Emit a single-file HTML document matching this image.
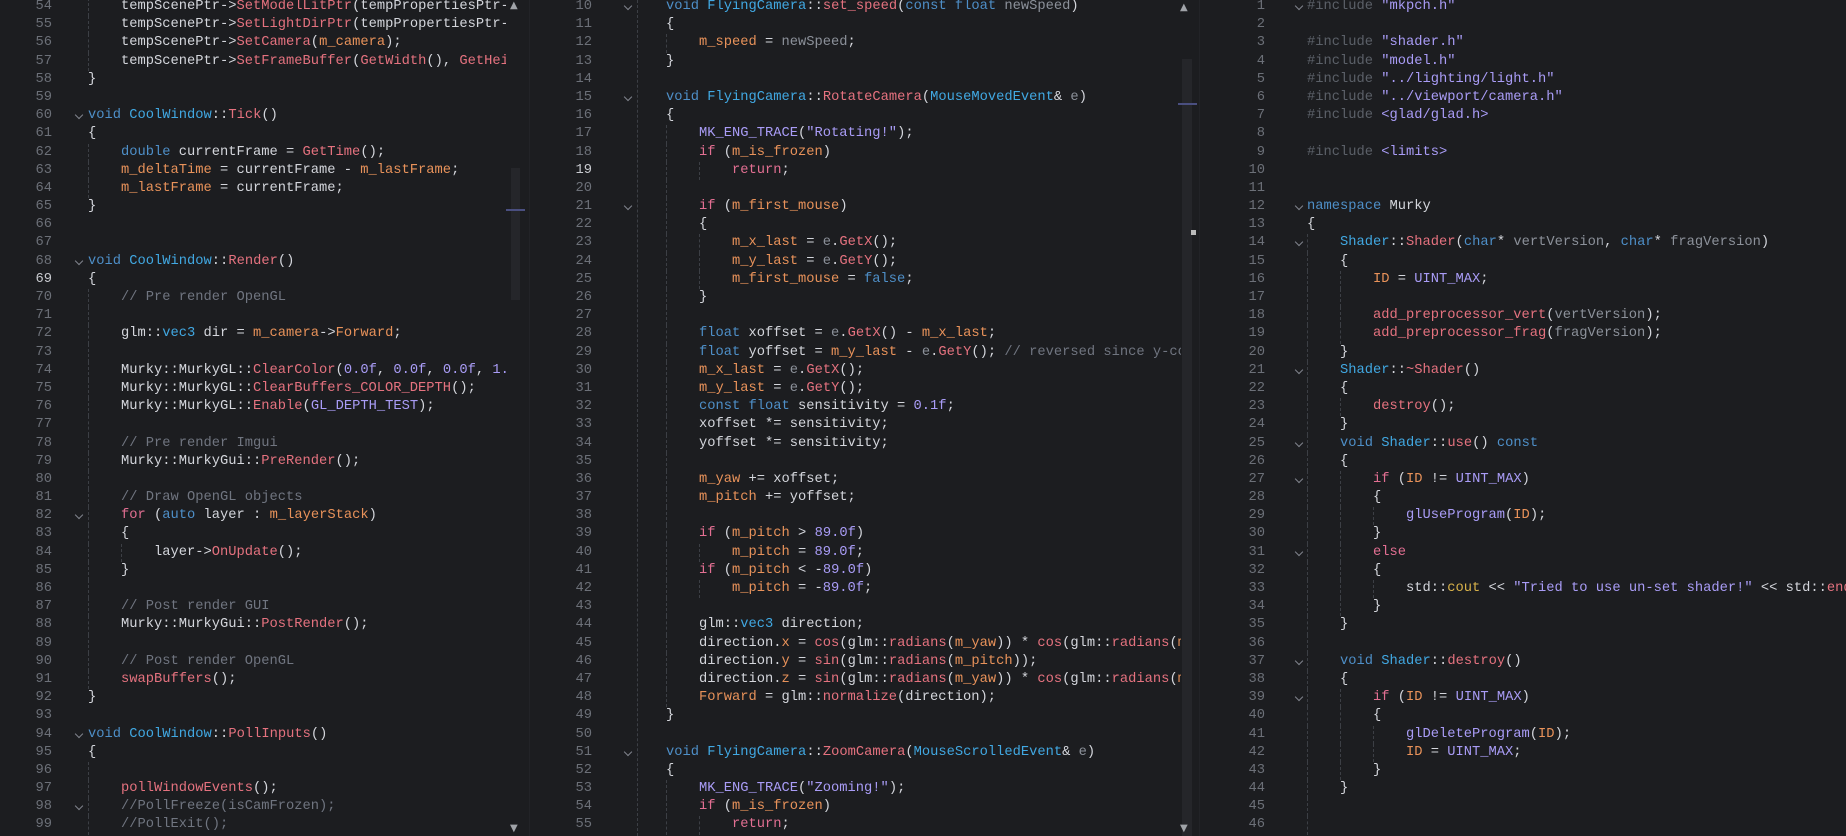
<!DOCTYPE html>
<html><head><meta charset="utf-8"><style>
html,body{margin:0;padding:0;background:#1c1d20;width:1846px;height:836px;overflow:hidden}
body{position:relative;font-family:"Liberation Mono",monospace;font-size:13.75px;color:#d4d6dc}
.p{position:absolute;top:-2px;height:840px;overflow:hidden}
.l{height:18.2px;line-height:18.2px;white-space:pre;position:relative}
.n{display:inline-block;text-align:right;color:#6c7078;vertical-align:top}
.cur{color:#c9cbd0}
.s{display:inline-block;position:relative;vertical-align:top;height:18.2px}
.f::after{content:"";position:absolute;top:5px;width:5px;height:5px;border-right:1px solid #80848c;border-bottom:1px solid #80848c;transform:rotate(45deg)}
i{display:inline-block;width:4ch;height:18.2px;border-left:1px dashed #3c3f45;box-sizing:border-box;vertical-align:top}
.k{color:#4e8fc8}.t{color:#41a8e2}.fn{color:#e5727f}.m{color:#e8925a}.c{color:#e26f92}.st{color:#a99cf6}
.o{color:#707580}.pa{color:#8c919a}.y{color:#d8b24a}.d{color:#5b6068}.w{color:#d4d6dc}
#p1{left:0;width:506px}#p1 .n{width:52px}#p1 .s{width:36px}#p1 .f::after{left:24px}
#p2{left:530px;width:651px}#p2 .n{width:62px}#p2 .s{width:74px}#p2 .f::after{left:33px}
#p3{left:1200px;width:646px}#p3 .n{width:65px}#p3 .s{width:42px}#p3 .f::after{left:31px}
.sb{position:absolute;background:#25262a}
.mk{position:absolute;height:2px;background:#4a4f80}
.ar{position:absolute;color:#a0a3a8;font-size:10px;font-family:"DejaVu Sans",sans-serif}
.vl{position:absolute;border-left:1px dashed #3c3f45}
</style></head><body>
<div class="sb" style="left:511px;top:168px;width:9px;height:132px"></div>
<div class="mk" style="left:506px;top:209px;width:19px"></div>
<div class="sb" style="left:1182px;top:59px;width:10px;height:777px"></div>
<div class="mk" style="left:1178px;top:103px;width:19px"></div>
<div style="position:absolute;left:1191px;top:230px;width:5px;height:5px;background:#bbb"></div>
<div class="ar" style="left:510px;top:0px">▲</div>
<div class="ar" style="left:510px;top:823px">▼</div>
<div class="ar" style="left:1180px;top:2px">▲</div>
<div class="ar" style="left:1180px;top:823px">▼</div>
<div style="position:absolute;left:529px;top:0;width:1px;height:836px;background:#222327"></div>
<div style="position:absolute;left:1199px;top:0;width:1px;height:836px;background:#222327"></div>
<div class="vl" style="left:637px;top:0;height:836px"></div>

<div class="p" id="p1">
<div class="l"><span class="n">54</span><span class="s"></span><i></i>tempScenePtr-&gt;<span class="fn">SetModelLitPtr</span>(tempPropertiesPtr-</div>
<div class="l"><span class="n">55</span><span class="s"></span><i></i>tempScenePtr-&gt;<span class="fn">SetLightDirPtr</span>(tempPropertiesPtr-</div>
<div class="l"><span class="n">56</span><span class="s"></span><i></i>tempScenePtr-&gt;<span class="fn">SetCamera</span>(<span class="m">m_camera</span>);</div>
<div class="l"><span class="n">57</span><span class="s"></span><i></i>tempScenePtr-&gt;<span class="fn">SetFrameBuffer</span>(<span class="fn">GetWidth</span>(), <span class="fn">GetHei</span></div>
<div class="l"><span class="n">58</span><span class="s"></span>}</div>
<div class="l"><span class="n">59</span><span class="s"></span></div>
<div class="l"><span class="n">60</span><span class="s f"></span><span class="k">void</span> <span class="t">CoolWindow</span>::<span class="fn">Tick</span>()</div>
<div class="l"><span class="n">61</span><span class="s"></span>{</div>
<div class="l"><span class="n">62</span><span class="s"></span><i></i><span class="k">double</span> currentFrame = <span class="fn">GetTime</span>();</div>
<div class="l"><span class="n">63</span><span class="s"></span><i></i><span class="m">m_deltaTime</span> = currentFrame - <span class="m">m_lastFrame</span>;</div>
<div class="l"><span class="n">64</span><span class="s"></span><i></i><span class="m">m_lastFrame</span> = currentFrame;</div>
<div class="l"><span class="n">65</span><span class="s"></span>}</div>
<div class="l"><span class="n">66</span><span class="s"></span></div>
<div class="l"><span class="n">67</span><span class="s"></span></div>
<div class="l"><span class="n">68</span><span class="s f"></span><span class="k">void</span> <span class="t">CoolWindow</span>::<span class="fn">Render</span>()</div>
<div class="l"><span class="n cur">69</span><span class="s"></span>{</div>
<div class="l"><span class="n">70</span><span class="s"></span><i></i><span class="o">// Pre render OpenGL</span></div>
<div class="l"><span class="n">71</span><span class="s"></span><i></i></div>
<div class="l"><span class="n">72</span><span class="s"></span><i></i>glm::<span class="t">vec3</span> dir = <span class="m">m_camera</span>-&gt;<span class="m">Forward</span>;</div>
<div class="l"><span class="n">73</span><span class="s"></span><i></i></div>
<div class="l"><span class="n">74</span><span class="s"></span><i></i>Murky::MurkyGL::<span class="fn">ClearColor</span>(<span class="st">0.0f</span>, <span class="st">0.0f</span>, <span class="st">0.0f</span>, <span class="st">1.</span></div>
<div class="l"><span class="n">75</span><span class="s"></span><i></i>Murky::MurkyGL::<span class="fn">ClearBuffers_COLOR_DEPTH</span>();</div>
<div class="l"><span class="n">76</span><span class="s"></span><i></i>Murky::MurkyGL::<span class="fn">Enable</span>(<span class="st">GL_DEPTH_TEST</span>);</div>
<div class="l"><span class="n">77</span><span class="s"></span><i></i></div>
<div class="l"><span class="n">78</span><span class="s"></span><i></i><span class="o">// Pre render Imgui</span></div>
<div class="l"><span class="n">79</span><span class="s"></span><i></i>Murky::MurkyGui::<span class="fn">PreRender</span>();</div>
<div class="l"><span class="n">80</span><span class="s"></span><i></i></div>
<div class="l"><span class="n">81</span><span class="s"></span><i></i><span class="o">// Draw OpenGL objects</span></div>
<div class="l"><span class="n">82</span><span class="s f"></span><i></i><span class="c">for</span> (<span class="k">auto</span> layer : <span class="m">m_layerStack</span>)</div>
<div class="l"><span class="n">83</span><span class="s"></span><i></i>{</div>
<div class="l"><span class="n">84</span><span class="s"></span><i></i><i></i>layer-&gt;<span class="fn">OnUpdate</span>();</div>
<div class="l"><span class="n">85</span><span class="s"></span><i></i>}</div>
<div class="l"><span class="n">86</span><span class="s"></span><i></i></div>
<div class="l"><span class="n">87</span><span class="s"></span><i></i><span class="o">// Post render GUI</span></div>
<div class="l"><span class="n">88</span><span class="s"></span><i></i>Murky::MurkyGui::<span class="fn">PostRender</span>();</div>
<div class="l"><span class="n">89</span><span class="s"></span><i></i></div>
<div class="l"><span class="n">90</span><span class="s"></span><i></i><span class="o">// Post render OpenGL</span></div>
<div class="l"><span class="n">91</span><span class="s"></span><i></i><span class="fn">swapBuffers</span>();</div>
<div class="l"><span class="n">92</span><span class="s"></span>}</div>
<div class="l"><span class="n">93</span><span class="s"></span></div>
<div class="l"><span class="n">94</span><span class="s f"></span><span class="k">void</span> <span class="t">CoolWindow</span>::<span class="fn">PollInputs</span>()</div>
<div class="l"><span class="n">95</span><span class="s"></span>{</div>
<div class="l"><span class="n">96</span><span class="s"></span><i></i></div>
<div class="l"><span class="n">97</span><span class="s"></span><i></i><span class="fn">pollWindowEvents</span>();</div>
<div class="l"><span class="n">98</span><span class="s f"></span><i></i><span class="o">//PollFreeze(isCamFrozen);</span></div>
<div class="l"><span class="n">99</span><span class="s"></span><i></i><span class="o">//PollExit();</span></div>
</div>

<div class="p" id="p2">
<div class="l"><span class="n">10</span><span class="s f"></span><span class="k">void</span> <span class="t">FlyingCamera</span>::<span class="fn">set_speed</span>(<span class="k">const float</span> <span class="pa">newSpeed</span>)</div>
<div class="l"><span class="n">11</span><span class="s"></span>{</div>
<div class="l"><span class="n">12</span><span class="s"></span><i></i><span class="m">m_speed</span> = <span class="pa">newSpeed</span>;</div>
<div class="l"><span class="n">13</span><span class="s"></span>}</div>
<div class="l"><span class="n">14</span><span class="s"></span></div>
<div class="l"><span class="n">15</span><span class="s f"></span><span class="k">void</span> <span class="t">FlyingCamera</span>::<span class="fn">RotateCamera</span>(<span class="t">MouseMovedEvent</span>&amp; <span class="pa">e</span>)</div>
<div class="l"><span class="n">16</span><span class="s"></span>{</div>
<div class="l"><span class="n">17</span><span class="s"></span><i></i><span class="st">MK_ENG_TRACE</span>(<span class="st">"Rotating!"</span>);</div>
<div class="l"><span class="n">18</span><span class="s"></span><i></i><span class="c">if</span> (<span class="m">m_is_frozen</span>)</div>
<div class="l"><span class="n cur">19</span><span class="s"></span><i></i><i></i><span class="c">return</span>;</div>
<div class="l"><span class="n">20</span><span class="s"></span><i></i></div>
<div class="l"><span class="n">21</span><span class="s f"></span><i></i><span class="c">if</span> (<span class="m">m_first_mouse</span>)</div>
<div class="l"><span class="n">22</span><span class="s"></span><i></i>{</div>
<div class="l"><span class="n">23</span><span class="s"></span><i></i><i></i><span class="m">m_x_last</span> = <span class="pa">e</span>.<span class="fn">GetX</span>();</div>
<div class="l"><span class="n">24</span><span class="s"></span><i></i><i></i><span class="m">m_y_last</span> = <span class="pa">e</span>.<span class="fn">GetY</span>();</div>
<div class="l"><span class="n">25</span><span class="s"></span><i></i><i></i><span class="m">m_first_mouse</span> = <span class="k">false</span>;</div>
<div class="l"><span class="n">26</span><span class="s"></span><i></i>}</div>
<div class="l"><span class="n">27</span><span class="s"></span><i></i></div>
<div class="l"><span class="n">28</span><span class="s"></span><i></i><span class="k">float</span> xoffset = <span class="pa">e</span>.<span class="fn">GetX</span>() - <span class="m">m_x_last</span>;</div>
<div class="l"><span class="n">29</span><span class="s"></span><i></i><span class="k">float</span> yoffset = <span class="m">m_y_last</span> - <span class="pa">e</span>.<span class="fn">GetY</span>(); <span class="o">// reversed since y-co</span></div>
<div class="l"><span class="n">30</span><span class="s"></span><i></i><span class="m">m_x_last</span> = <span class="pa">e</span>.<span class="fn">GetX</span>();</div>
<div class="l"><span class="n">31</span><span class="s"></span><i></i><span class="m">m_y_last</span> = <span class="pa">e</span>.<span class="fn">GetY</span>();</div>
<div class="l"><span class="n">32</span><span class="s"></span><i></i><span class="k">const float</span> sensitivity = <span class="st">0.1f</span>;</div>
<div class="l"><span class="n">33</span><span class="s"></span><i></i>xoffset *= sensitivity;</div>
<div class="l"><span class="n">34</span><span class="s"></span><i></i>yoffset *= sensitivity;</div>
<div class="l"><span class="n">35</span><span class="s"></span><i></i></div>
<div class="l"><span class="n">36</span><span class="s"></span><i></i><span class="m">m_yaw</span> += xoffset;</div>
<div class="l"><span class="n">37</span><span class="s"></span><i></i><span class="m">m_pitch</span> += yoffset;</div>
<div class="l"><span class="n">38</span><span class="s"></span><i></i></div>
<div class="l"><span class="n">39</span><span class="s"></span><i></i><span class="c">if</span> (<span class="m">m_pitch</span> &gt; <span class="st">89.0f</span>)</div>
<div class="l"><span class="n">40</span><span class="s"></span><i></i><i></i><span class="m">m_pitch</span> = <span class="st">89.0f</span>;</div>
<div class="l"><span class="n">41</span><span class="s"></span><i></i><span class="c">if</span> (<span class="m">m_pitch</span> &lt; -<span class="st">89.0f</span>)</div>
<div class="l"><span class="n">42</span><span class="s"></span><i></i><i></i><span class="m">m_pitch</span> = -<span class="st">89.0f</span>;</div>
<div class="l"><span class="n">43</span><span class="s"></span><i></i></div>
<div class="l"><span class="n">44</span><span class="s"></span><i></i>glm::<span class="t">vec3</span> direction;</div>
<div class="l"><span class="n">45</span><span class="s"></span><i></i>direction.<span class="m">x</span> = <span class="fn">cos</span>(glm::<span class="fn">radians</span>(<span class="m">m_yaw</span>)) * <span class="fn">cos</span>(glm::<span class="fn">radians</span>(<span class="m">m</span></div>
<div class="l"><span class="n">46</span><span class="s"></span><i></i>direction.<span class="m">y</span> = <span class="fn">sin</span>(glm::<span class="fn">radians</span>(<span class="m">m_pitch</span>));</div>
<div class="l"><span class="n">47</span><span class="s"></span><i></i>direction.<span class="m">z</span> = <span class="fn">sin</span>(glm::<span class="fn">radians</span>(<span class="m">m_yaw</span>)) * <span class="fn">cos</span>(glm::<span class="fn">radians</span>(<span class="m">m</span></div>
<div class="l"><span class="n">48</span><span class="s"></span><i></i><span class="m">Forward</span> = glm::<span class="fn">normalize</span>(direction);</div>
<div class="l"><span class="n">49</span><span class="s"></span>}</div>
<div class="l"><span class="n">50</span><span class="s"></span></div>
<div class="l"><span class="n">51</span><span class="s f"></span><span class="k">void</span> <span class="t">FlyingCamera</span>::<span class="fn">ZoomCamera</span>(<span class="t">MouseScrolledEvent</span>&amp; <span class="pa">e</span>)</div>
<div class="l"><span class="n">52</span><span class="s"></span>{</div>
<div class="l"><span class="n">53</span><span class="s"></span><i></i><span class="st">MK_ENG_TRACE</span>(<span class="st">"Zooming!"</span>);</div>
<div class="l"><span class="n">54</span><span class="s"></span><i></i><span class="c">if</span> (<span class="m">m_is_frozen</span>)</div>
<div class="l"><span class="n">55</span><span class="s"></span><i></i><i></i><span class="c">return</span>;</div>
</div>

<div class="p" id="p3">
<div class="l"><span class="n">1</span><span class="s f"></span><span class="d">#include</span> <span class="st">"mkpch.h"</span></div>
<div class="l"><span class="n">2</span><span class="s"></span></div>
<div class="l"><span class="n">3</span><span class="s"></span><span class="d">#include</span> <span class="st">"shader.h"</span></div>
<div class="l"><span class="n">4</span><span class="s"></span><span class="d">#include</span> <span class="st">"model.h"</span></div>
<div class="l"><span class="n">5</span><span class="s"></span><span class="d">#include</span> <span class="st">"../lighting/light.h"</span></div>
<div class="l"><span class="n">6</span><span class="s"></span><span class="d">#include</span> <span class="st">"../viewport/camera.h"</span></div>
<div class="l"><span class="n">7</span><span class="s"></span><span class="d">#include</span> <span class="st">&lt;glad/glad.h&gt;</span></div>
<div class="l"><span class="n">8</span><span class="s"></span></div>
<div class="l"><span class="n">9</span><span class="s"></span><span class="d">#include</span> <span class="st">&lt;limits&gt;</span></div>
<div class="l"><span class="n">10</span><span class="s"></span></div>
<div class="l"><span class="n">11</span><span class="s"></span></div>
<div class="l"><span class="n">12</span><span class="s f"></span><span class="k">namespace</span> Murky</div>
<div class="l"><span class="n">13</span><span class="s"></span>{</div>
<div class="l"><span class="n">14</span><span class="s f"></span><i></i><span class="t">Shader</span>::<span class="fn">Shader</span>(<span class="k">char</span>* <span class="pa">vertVersion</span>, <span class="k">char</span>* <span class="pa">fragVersion</span>)</div>
<div class="l"><span class="n">15</span><span class="s"></span><i></i>{</div>
<div class="l"><span class="n">16</span><span class="s"></span><i></i><i></i><span class="m">ID</span> = <span class="st">UINT_MAX</span>;</div>
<div class="l"><span class="n">17</span><span class="s"></span><i></i><i></i></div>
<div class="l"><span class="n">18</span><span class="s"></span><i></i><i></i><span class="fn">add_preprocessor_vert</span>(<span class="pa">vertVersion</span>);</div>
<div class="l"><span class="n">19</span><span class="s"></span><i></i><i></i><span class="fn">add_preprocessor_frag</span>(<span class="pa">fragVersion</span>);</div>
<div class="l"><span class="n">20</span><span class="s"></span><i></i>}</div>
<div class="l"><span class="n">21</span><span class="s f"></span><i></i><span class="t">Shader</span>::<span class="fn">~Shader</span>()</div>
<div class="l"><span class="n">22</span><span class="s"></span><i></i>{</div>
<div class="l"><span class="n">23</span><span class="s"></span><i></i><i></i><span class="fn">destroy</span>();</div>
<div class="l"><span class="n">24</span><span class="s"></span><i></i>}</div>
<div class="l"><span class="n">25</span><span class="s f"></span><i></i><span class="k">void</span> <span class="t">Shader</span>::<span class="fn">use</span>() <span class="k">const</span></div>
<div class="l"><span class="n">26</span><span class="s"></span><i></i>{</div>
<div class="l"><span class="n">27</span><span class="s f"></span><i></i><i></i><span class="c">if</span> (<span class="m">ID</span> != <span class="st">UINT_MAX</span>)</div>
<div class="l"><span class="n">28</span><span class="s"></span><i></i><i></i>{</div>
<div class="l"><span class="n">29</span><span class="s"></span><i></i><i></i><i></i><span class="st">glUseProgram</span>(<span class="m">ID</span>);</div>
<div class="l"><span class="n">30</span><span class="s"></span><i></i><i></i>}</div>
<div class="l"><span class="n">31</span><span class="s f"></span><i></i><i></i><span class="c">else</span></div>
<div class="l"><span class="n">32</span><span class="s"></span><i></i><i></i>{</div>
<div class="l"><span class="n">33</span><span class="s"></span><i></i><i></i><i></i>std::<span class="y">cout</span> &lt;&lt; <span class="st">"Tried to use un-set shader!"</span> &lt;&lt; std::<span class="fn">endl</span></div>
<div class="l"><span class="n">34</span><span class="s"></span><i></i><i></i>}</div>
<div class="l"><span class="n">35</span><span class="s"></span><i></i>}</div>
<div class="l"><span class="n">36</span><span class="s"></span><i></i></div>
<div class="l"><span class="n">37</span><span class="s f"></span><i></i><span class="k">void</span> <span class="t">Shader</span>::<span class="fn">destroy</span>()</div>
<div class="l"><span class="n">38</span><span class="s"></span><i></i>{</div>
<div class="l"><span class="n">39</span><span class="s f"></span><i></i><i></i><span class="c">if</span> (<span class="m">ID</span> != <span class="st">UINT_MAX</span>)</div>
<div class="l"><span class="n">40</span><span class="s"></span><i></i><i></i>{</div>
<div class="l"><span class="n">41</span><span class="s"></span><i></i><i></i><i></i><span class="st">glDeleteProgram</span>(<span class="m">ID</span>);</div>
<div class="l"><span class="n">42</span><span class="s"></span><i></i><i></i><i></i><span class="m">ID</span> = <span class="st">UINT_MAX</span>;</div>
<div class="l"><span class="n">43</span><span class="s"></span><i></i><i></i>}</div>
<div class="l"><span class="n">44</span><span class="s"></span><i></i>}</div>
<div class="l"><span class="n">45</span><span class="s"></span><i></i></div>
<div class="l"><span class="n">46</span><span class="s"></span><i></i></div>
</div>
</body></html>
